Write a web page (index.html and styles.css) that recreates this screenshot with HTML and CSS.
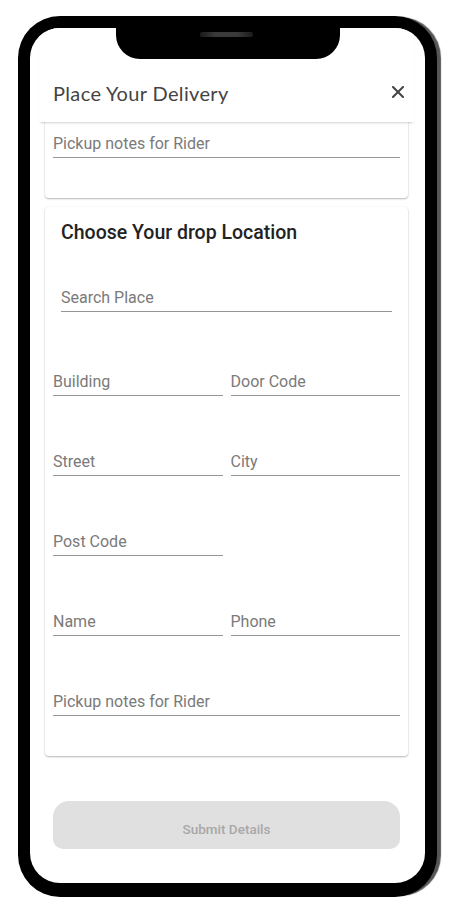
FILE: index.html
```html
<!DOCTYPE html>
<html>
<head>
<meta charset="utf-8">
<link rel="stylesheet" href="styles.css">
</head>
<body>
<div class="phone">
  <div class="screen">
    <div class="notch"><span class="speaker"></span></div>
    <header class="dialog-head">
      <h1 class="dialog-title">Place Your Delivery</h1>
      <button class="close" aria-label="Close">
        <svg width="12" height="12" viewBox="0 0 12 12"><path d="M1 1L11 11M11 1L1 11" stroke="#444" stroke-width="2" stroke-linecap="square"/></svg>
      </button>
    </header>
    <div class="scroll">
      <section class="card card-pickup">
        <div class="row">
          <div class="field full">Pickup notes for Rider</div>
        </div>
      </section>
      <section class="card card-drop">
        <h2 class="card-title">Choose Your drop Location</h2>
        <div class="search field">Search Place</div>
        <div class="row">
          <div class="field">Building</div>
          <div class="field">Door Code</div>
        </div>
        <div class="row">
          <div class="field">Street</div>
          <div class="field">City</div>
        </div>
        <div class="row">
          <div class="field">Post Code</div>
        </div>
        <div class="row">
          <div class="field">Name</div>
          <div class="field">Phone</div>
        </div>
        <div class="row">
          <div class="field full">Pickup notes for Rider</div>
        </div>
      </section>
      <button class="submit">Submit Details</button>
    </div>
  </div>
</div>
</body>
</html>
```
FILE: styles.css
```css
* { box-sizing: border-box; }
html, body { margin: 0; padding: 0; background: #fff; }
body { font-family: Roboto, "Liberation Sans", sans-serif; }

.phone {
  margin: 16px 0 0 18px;
  width: 419px;
  height: 881px;
  background: #000;
  border-radius: 42px;
  padding: 12px 12px 14px 12px;
  box-shadow: 5px 0 1px -1px #555;
}

.screen {
  position: relative;
  width: 395px;
  height: 855px;
  background: #fff;
  border-radius: 30px;
  overflow: hidden;
  display: flex;
  flex-direction: column;
}

.notch {
  position: absolute;
  left: 86px;
  top: 0;
  width: 224px;
  height: 31px;
  background: #000;
  border-radius: 0 0 24px 24px;
  z-index: 5;
}
.speaker {
  position: absolute;
  left: 84px;
  top: 4px;
  width: 53px;
  height: 5px;
  border-radius: 2px;
  background: linear-gradient(90deg, #1a1a1a, #3a3a3a 30%, #3a3a3a 70%, #1a1a1a);
}

.dialog-head {
  position: relative;
  z-index: 2;
  margin: 0 11px 0 9px;
  padding: 53px 10px 17px 14px;
  background: #fff;
  display: flex;
  align-items: flex-start;
  justify-content: space-between;
  box-shadow: 0 2px 2px -1px rgba(0,0,0,0.18);
}
.dialog-title {
  margin: 0;
  font-family: Lato, "Open Sans", sans-serif;
  font-weight: 400;
  font-size: 20px;
  line-height: 24px;
  letter-spacing: 0.35px;
  color: #444;
}
.close {
  border: 0;
  background: none;
  padding: 0;
  margin-top: 5px;
  width: 12px;
  height: 12px;
  display: block;
}
.close svg { display: block; }

.scroll {
  position: relative;
  z-index: 1;
  overflow: hidden;
  height: 727px;
  padding: 0 17px 0 15px;
}

.card {
  background: #fff;
  border-radius: 4px;
  box-shadow: 0 1px 2px rgba(0,0,0,0.28), 0 0 2px rgba(0,0,0,0.06);
}
.card-pickup {
  margin-top: -4px;
  padding: 16px 8px 40px 8px;
}
.card-drop {
  margin-top: 9px;
  padding: 14px 8px 40px 8px;
}
.card-title {
  margin: 0 8px;
  font-size: 19.5px;
  line-height: 23px;
  font-weight: 500;
  color: #222;
}

.field {
  font-size: 16px;
  line-height: 19px;
  color: #7a7a7a;
  padding-bottom: 4px;
  border-bottom: 1px solid #969696;
}
.search {
  margin: 44px 8px 0 8px;
}
.row {
  display: grid;
  grid-template-columns: 1fr 1fr;
  column-gap: 8px;
  margin-top: 56px;
}
.card-drop .search + .row { margin-top: 60px; }
.card-pickup .row { margin-top: 0; }
.row .full { grid-column: 1 / 3; }

.submit {
  display: block;
  margin: 45px 0 0 8px;
  width: 347px;
  height: 48px;
  border: 0;
  border-radius: 16px 16px 10px 10px;
  background: #e0e0e0;
  color: #a8a8a8;
  font-family: Roboto, sans-serif;
  font-weight: 500;
  font-size: 13.5px;
  padding-top: 9px;
}
```
